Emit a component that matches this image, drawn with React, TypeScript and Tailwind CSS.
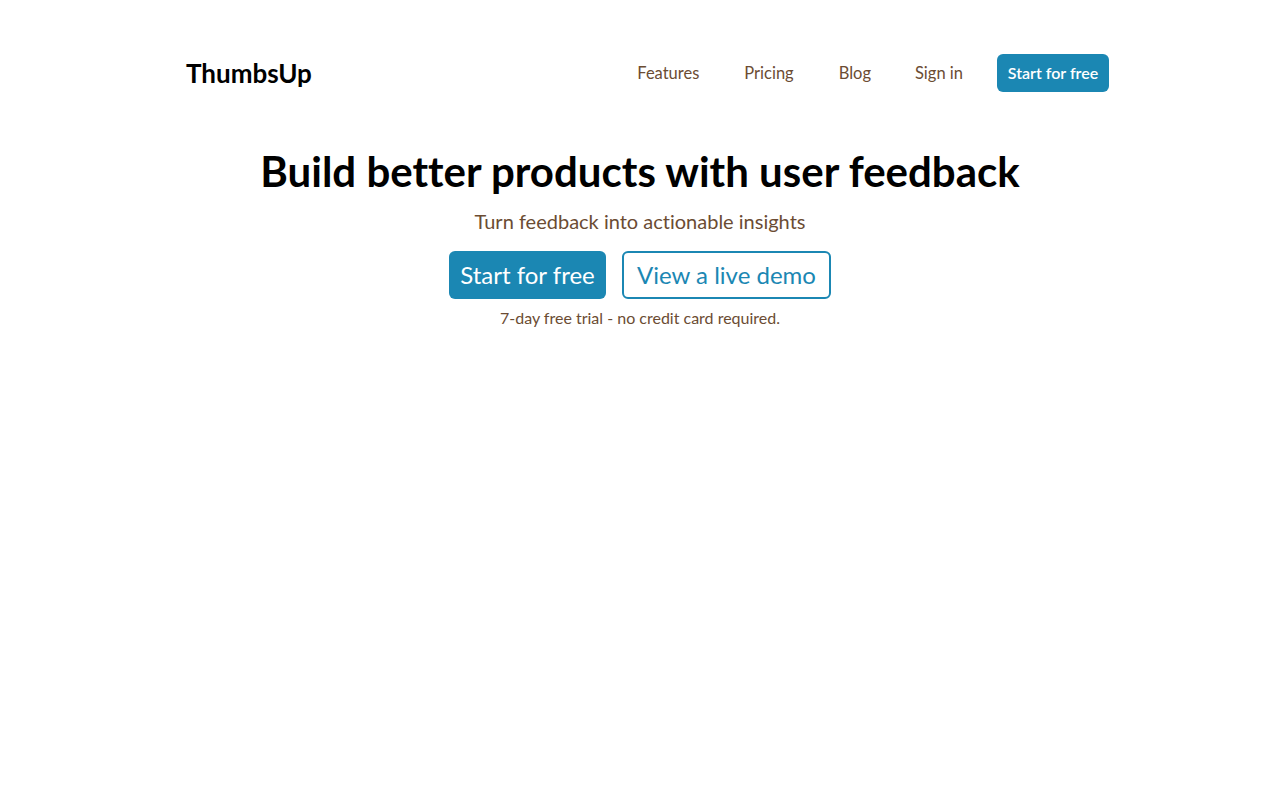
import React from "react";

export default function App() {
  const brown = "text-[#6b4c33]";
  return (
    <div className="min-h-[800px] bg-white font-['Lato','Noto_Sans',sans-serif] [font-variant-ligatures:none]">
      <header className="flex items-center justify-between pl-[186px] pr-[171px] pt-[54px]">
        <div className="text-[26px] font-bold text-black leading-none">ThumbsUp</div>
        <nav className="flex items-center">
          <a className={`text-[16.5px] ${brown} mr-[45px]`}>Features</a>
          <a className={`text-[16.5px] ${brown} mr-[45px]`}>Pricing</a>
          <a className={`text-[16.5px] ${brown} mr-[44px]`}>Blog</a>
          <a className={`text-[16.5px] ${brown} mr-[34px]`}>Sign in</a>
          <a className="flex h-[38px] w-[112px] items-center justify-center rounded-[6px] bg-[#1b87b3] text-[16px] font-semibold text-white">
            Start for free
          </a>
        </nav>
      </header>
      <main className="mt-[53px] flex flex-col items-center">
        <h1 className="text-[42px] font-bold leading-[52px] text-black">Build better products with user feedback</h1>
        <p className={`mt-[10px] text-[20px] leading-[28px] ${brown}`}>Turn feedback into actionable insights</p>
        <div className="mt-[16px] flex gap-[16px]">
          <a className="flex h-[48px] w-[157px] items-center justify-center rounded-[6px] bg-[#1b87b3] text-[24px] text-white">
            Start for free
          </a>
          <a className="flex h-[48px] w-[209px] items-center justify-center rounded-[6px] border-2 border-[#1b87b3] text-[24px] text-[#1b87b3]">
            View a live demo
          </a>
        </div>
        <p className={`mt-[8px] text-[16px] leading-[22px] ${brown}`}>7-day free trial - no credit card required.</p>
      </main>
    </div>
  );
}
